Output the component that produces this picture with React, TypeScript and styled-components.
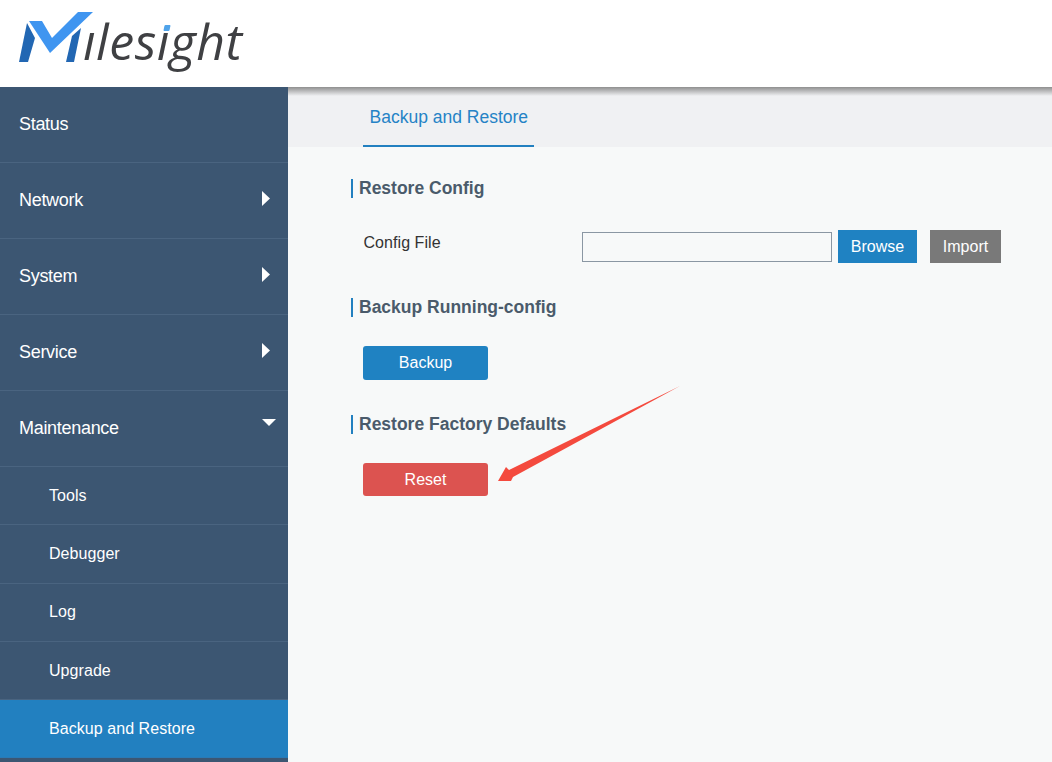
import React from "react";
import styled, { createGlobalStyle } from "styled-components";

const Global = createGlobalStyle`
  html, body { margin: 0; padding: 0; height: 100%; overflow: hidden; background: #f7f9f9; }
  body { font-family: "Liberation Sans", Arial, sans-serif; }
  * { box-sizing: border-box; }
`;
const Page = styled.div`width: 1052px; height: 762px; display: flex; flex-direction: column; overflow: hidden; position: relative;`;
const Header = styled.header`height: 87px; flex: none; background: #fff; padding: 12px 0 0 19px; position: relative;`;
const LogoWrap = styled.div`display: flex; align-items: flex-start; position: relative; width: 230px; height: 64px;`;
const LogoMark = styled.svg`display: block; flex: none;`;
const LogoText = styled.span`
  position: absolute; left: 64px; top: -3px;
  font-family: "Open Sans", sans-serif; font-style: italic; font-weight: 400; font-size: 50px; line-height: 64px;
  letter-spacing: 0.5px; color: #3f4043; white-space: nowrap;
`;
const BlueDot = styled.span`position: absolute; left: 145px; top: 13px; width: 6px; height: 6px; border-radius: 1px; background: #4fa3ea; transform: skewX(-12deg);`;
const Body = styled.div`flex: 1; display: flex; min-height: 0; position: relative;
  &::before { content: ""; position: absolute; left: 288px; right: 0; top: 0; height: 9px; background: linear-gradient(#8f8f8f, rgba(240,241,243,0)); z-index: 1; }
`;
const Side = styled.nav`width: 288px; flex: none; background: #3c5672; display: flex; flex-direction: column;`;
const MenuItem = styled.div`
  height: 76px; flex: none; border-bottom: 1px solid #4a6480; display: flex; align-items: center; justify-content: space-between;
  padding: 0 0 0 19px; color: #fff; font-size: 18px; letter-spacing: -0.3px;
`;
const CaretSlot = styled.span<{ $up: number }>`width: 26px; flex: none; display: block; margin-top: ${p => -p.$up}px;`;
const SubItem = styled.div<{ $active?: boolean }>`
  height: ${p => (p.$active ? "57.7px" : "58.3px")}; flex: none; display: flex; align-items: center; padding: 0 0 0 49px; color: #fff; font-size: 16px; letter-spacing: 0.06px;
  background: ${p => (p.$active ? "#2280c0" : "transparent")};
  border-bottom: 1px solid ${p => (p.$active ? "#2a7ab5" : "#4a6480")};
`;
const Caret = styled.svg`display: block;`;
const Main = styled.main`flex: 1; display: flex; flex-direction: column; min-width: 0;`;
const TabBar = styled.div`height: 60px; flex: none; background: #f0f1f3; padding-left: 75px; display: flex;`;
const Tab = styled.div`
  height: 60px; padding: 2px 6px 0 6.5px; display: flex; align-items: center; color: #2583c6; font-size: 17.5px;
  border-bottom: 2px solid #2280c0;
`;
const Content = styled.div`flex: 1; padding: 32px 0 0 63px; display: flex; flex-direction: column;`;
const SectionTitle = styled.h3`
  margin: 0; height: 19px; border-left: 2px solid #2280c0; padding-left: 6px; display: flex; align-items: center;
  font-size: 17.5px; font-weight: 700; color: #4a5b6b; white-space: nowrap;
`;
const FormRow = styled.div`display: flex; align-items: flex-start; padding-left: 12.5px; margin-top: 32px; height: 33px; margin-bottom: 35px;`;
const Label = styled.label`width: 218.5px; font-size: 16px; line-height: 24px; color: #333; flex: none; margin-top: 1px; letter-spacing: 0.06px;`;
const FileInput = styled.div`width: 250px; height: 30px; margin-top: 2px; border: 1px solid #8a97a3; background: transparent; flex: none;`;
const SolidButton = styled.button<{ $bg: string; $w: number; $h?: number; $pb?: number; $ml?: number; $r?: number }>`
  width: ${p => p.$w}px; height: ${p => p.$h ?? 33}px; margin-left: ${p => p.$ml ?? 0}px; border: 0; border-radius: ${p => p.$r ?? 0}px; flex: none;
  padding: 0 0 ${p => p.$pb ?? 0}px;
  background: ${p => p.$bg}; color: #fff; font-family: inherit; font-size: 16px; line-height: 32px;
`;
const ActionRow = styled.div<{ $mb?: number }>`display: flex; padding-left: 12px; margin-top: 29px; margin-bottom: ${p => p.$mb ?? 0}px;`;
const ArrowOverlay = styled.svg`position: absolute; left: 490px; top: 380px; z-index: 2; pointer-events: none;`;

const Right = () => <CaretSlot $up={5}><Caret width="8" height="15" viewBox="0 0 8 15"><path d="M0 0 L8 7.5 L0 15 Z" fill="#fff" /></Caret></CaretSlot>;
const Down = () => <CaretSlot $up={12}><Caret width="14" height="7" viewBox="0 0 14 7"><path d="M0 0 L14 0 L7 7 Z" fill="#fff" /></Caret></CaretSlot>;

export default function App() {
  return (
    <Page>
      <Global />
      <Header>
        <LogoWrap>
          <LogoMark width="76" height="52" viewBox="0 0 76 52">
            <path d="M0 50 L9 50 L16 26 L8 11 Z" fill="#2267b3" />
            <path d="M10 9 L23 9 L33 26 L59 0 L74 0 L31 41 Z" fill="#3f95f0" />
            <path d="M47 50 L55 50 L62 16 L53 24 Z" fill="#2267b3" />
          </LogoMark>
          <LogoText>ılesıght</LogoText>
          <BlueDot />
        </LogoWrap>
      </Header>
      <Body>
        <Side>
          <MenuItem>Status</MenuItem>
          <MenuItem>Network<Right /></MenuItem>
          <MenuItem>System<Right /></MenuItem>
          <MenuItem>Service<Right /></MenuItem>
          <MenuItem>Maintenance<Down /></MenuItem>
          <SubItem>Tools</SubItem>
          <SubItem>Debugger</SubItem>
          <SubItem>Log</SubItem>
          <SubItem>Upgrade</SubItem>
          <SubItem $active>Backup and Restore</SubItem>
        </Side>
        <Main>
          <TabBar><Tab>Backup and Restore</Tab></TabBar>
          <Content>
            <SectionTitle>Restore Config</SectionTitle>
            <FormRow>
              <Label>Config File</Label>
              <FileInput />
              <SolidButton $bg="#1f82c2" $w={79} $ml={6}>Browse</SolidButton>
              <SolidButton $bg="#797979" $w={71} $ml={13}>Import</SolidButton>
            </FormRow>
            <SectionTitle>Backup Running-config</SectionTitle>
            <ActionRow $mb={35}><SolidButton $bg="#1f82c2" $w={125} $h={34} $pb={1} $r={3}>Backup</SolidButton></ActionRow>
            <SectionTitle>Restore Factory Defaults</SectionTitle>
            <ActionRow><SolidButton $bg="#dc5350" $w={125} $r={3}>Reset</SolidButton></ActionRow>
          </Content>
        </Main>
      </Body>
      <ArrowOverlay width="200" height="110" viewBox="490 380 200 110">
        <path d="M680 386 L509 470 L506 467 L498 481 L511 481 L513 477 Z" fill="#f44a3e" />
      </ArrowOverlay>
    </Page>
  );
}
